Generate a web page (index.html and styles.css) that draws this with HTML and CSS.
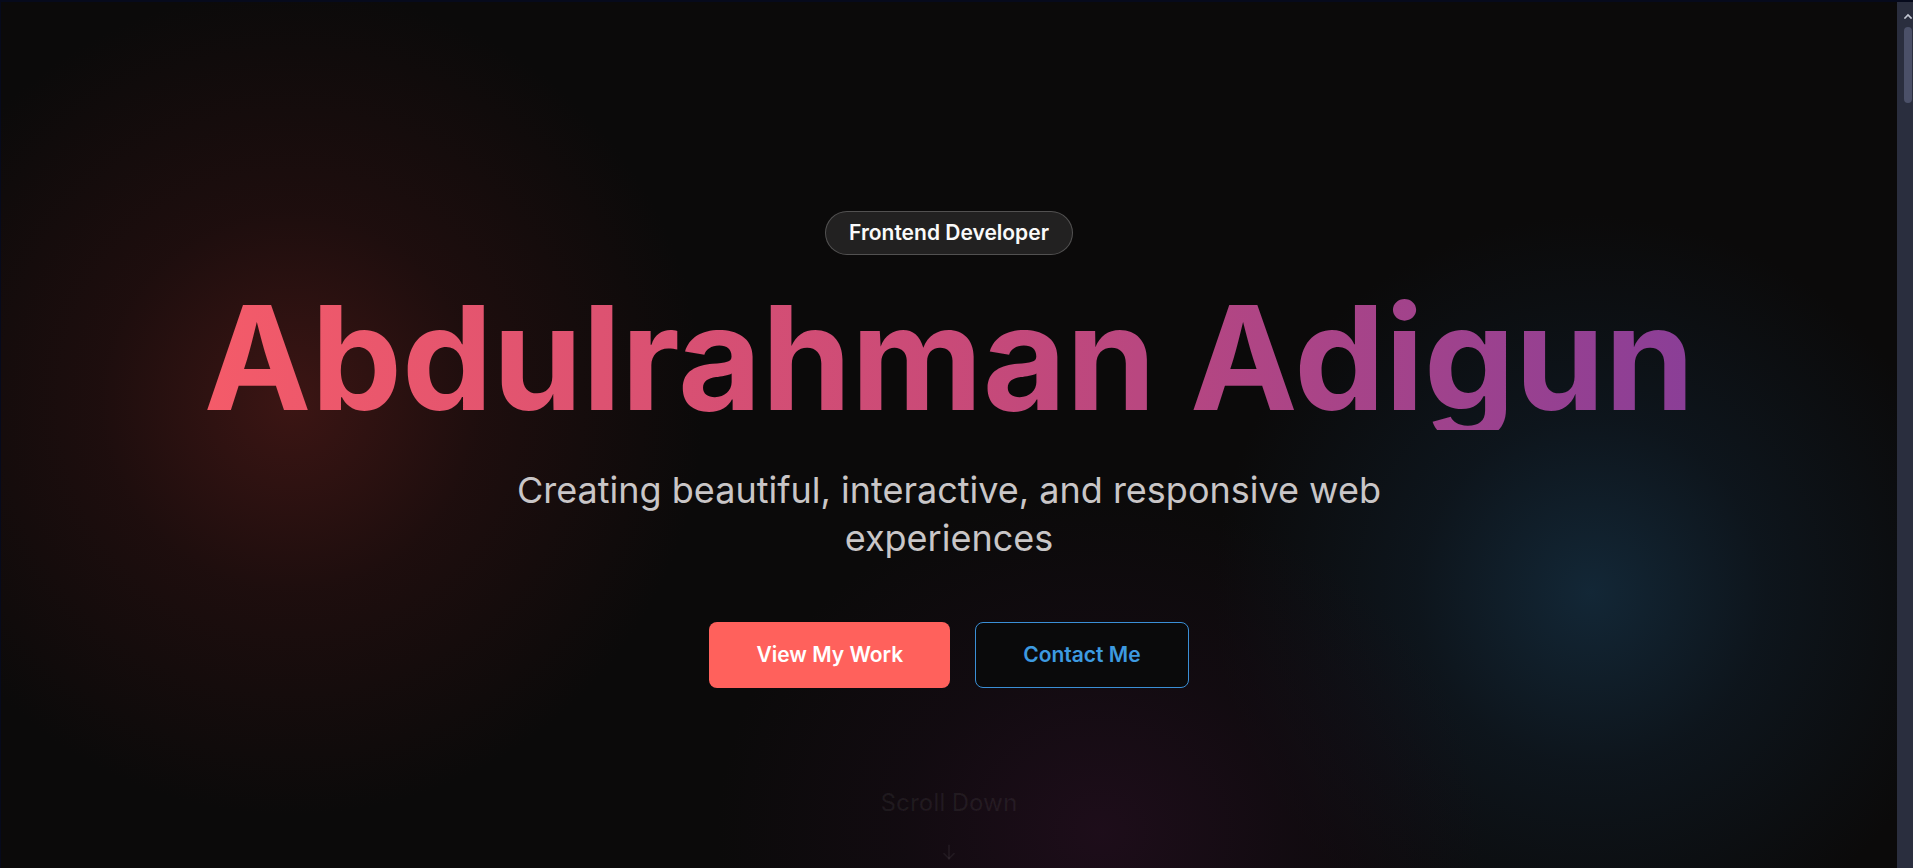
FILE: index.html
```html
<!DOCTYPE html>
<html lang="en">
<head>
<meta charset="utf-8">
<title>Abdulrahman Adigun — Frontend Developer</title>
<link rel="stylesheet" href="styles.css">
</head>
<body>
<div class="frame">
  <section class="hero">
    <div class="glow glow-red"></div>
    <div class="glow glow-blue"></div>
    <div class="glow glow-pink"></div>
    <div class="hero-content">
      <span class="badge">Frontend Developer</span>
      <h1 class="name">Abdulrahman Adigun</h1>
      <p class="tagline">Creating beautiful, interactive, and responsive web experiences</p>
      <div class="actions">
        <a class="btn btn-primary" href="#work">View My Work</a>
        <a class="btn btn-outline" href="#contact">Contact Me</a>
      </div>
      <div class="scroll-hint">
        <span class="scroll-text">Scroll Down</span>
        <svg class="scroll-arrow" width="20" height="20" viewBox="0 0 24 24" fill="none" stroke="currentColor" stroke-width="2" stroke-linecap="round" stroke-linejoin="round"><path d="M12 4v16"/><path d="M6 14l6 6 6-6"/></svg>
      </div>
    </div>
  </section>
</div>
<div class="scrollbar" aria-hidden="true">
  <svg class="scrollbar-arrow" width="8" height="6" viewBox="0 0 8 6" fill="none" stroke="currentColor" stroke-width="1.6" stroke-linecap="square"><path d="M1 5l3-3 3 3"/></svg>
  <div class="scrollbar-thumb"></div>
</div>
</body>
</html>
```
FILE: styles.css
```css
html {
  background: #060a1c;
}
body {
  margin: 0;
  padding-right: 16px;
  font-family: Inter, "Noto Sans", "Liberation Sans", sans-serif;
  background: #0b0a0a;
  color: #fff;
  overflow: hidden;
}
.frame {
  border-top: 2px solid #060a1c;
  border-left: 1px solid #060a1c;
  background: #0b0a0a;
}
.hero {
  position: relative;
  height: 866px;
  overflow: hidden;
  background: #0b0a0a;
}
.glow {
  position: absolute;
  border-radius: 50%;
  pointer-events: none;
}
.glow-red {
  left: -160px;
  top: -50px;
  width: 900px;
  height: 900px;
  background: radial-gradient(circle at center, rgba(72, 24, 22, 0.8) 0%, rgba(52, 18, 18, 0.45) 30%, rgba(11, 10, 10, 0) 65%);
}
.glow-blue {
  left: 1180px;
  top: 180px;
  width: 820px;
  height: 820px;
  background: radial-gradient(circle at center, rgba(20, 44, 62, 0.85) 0%, rgba(16, 32, 46, 0.5) 30%, rgba(11, 10, 10, 0) 65%);
}
.glow-pink {
  left: 700px;
  top: 480px;
  width: 800px;
  height: 700px;
  background: radial-gradient(ellipse at center, rgba(34, 14, 30, 0.8) 0%, rgba(26, 12, 24, 0.45) 35%, rgba(11, 10, 10, 0) 68%);
}
.hero-content {
  position: relative;
  display: flex;
  flex-direction: column;
  align-items: center;
  padding-top: 209px;
  text-align: center;
}
.badge {
  display: inline-block;
  box-sizing: border-box;
  height: 44px;
  padding: 9px 23px;
  font-size: 21px;
  line-height: 24px;
  font-weight: 600;
  color: #fafafa;
  background: #222121;
  border: 1px solid rgba(255, 255, 255, 0.22);
  border-radius: 999px;
}
.name {
  margin: 31px 0 0;
  font-size: 144px;
  line-height: 144px;
  height: 144px;
  font-weight: 700;
  background: linear-gradient(90deg, #f45b69 0%, #c94a78 50%, #8a3e97 100%);
  -webkit-background-clip: text;
  background-clip: text;
  color: transparent;
  width: fit-content;
}
.tagline {
  margin: 36px 0 0;
  max-width: 900px;
  font-size: 36px;
  line-height: 48px;
  font-weight: 400;
  color: #c9c6c7;
}
.actions {
  display: flex;
  gap: 25px;
  margin-top: 60px;
}
.btn {
  display: inline-block;
  font-size: 21px;
  line-height: 26px;
  font-weight: 600;
  text-decoration: none;
  border-radius: 8px;
}
.btn-primary {
  padding: 20px 47px;
  background: #ff615c;
  color: #fff;
}
.btn-outline {
  padding: 19px 47px;
  border: 1px solid #3a8fd6;
  color: #3d9ae0;
  background: #0a0a0b;
}
.scroll-hint {
  display: flex;
  flex-direction: column;
  align-items: center;
  margin-top: 100px;
  gap: 24px;
  color: rgba(255, 255, 255, 0.06);
}
.scroll-text {
  font-size: 24px;
  line-height: 30px;
  font-weight: 500;
}
.scroll-arrow {
  display: block;
}
.scrollbar {
  position: fixed;
  top: 0;
  right: 0;
  width: 16px;
  height: 100%;
  background: #2a2e3e;
  border-top: 2px solid #060a1c;
  box-sizing: border-box;
  display: flex;
  flex-direction: column;
  align-items: flex-end;
}
.scrollbar-arrow {
  display: block;
  margin: 11px 1px 0 0;
  color: #c3c7d3;
}
.scrollbar-thumb {
  width: 8px;
  height: 76px;
  margin: 8px 1px 0 0;
  border-radius: 4px;
  background: #4b5068;
}
```
